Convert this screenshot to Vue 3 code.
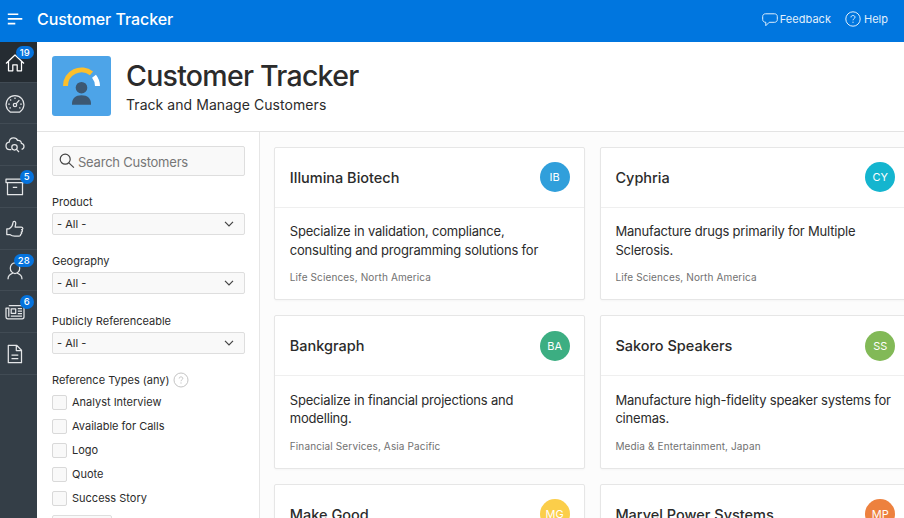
<script setup>
const nav = [
  { icon: 'home', badge: '19', active: true },
  { icon: 'gauge' },
  { icon: 'cloud' },
  { icon: 'archive', badge: '5' },
  { icon: 'thumb' },
  { icon: 'user', badge: '28' },
  { icon: 'news', badge: '6' },
  { icon: 'file' },
]
const filters = ['Product', 'Geography', 'Publicly Referenceable']
const types = ['Analyst Interview', 'Available for Calls', 'Logo', 'Quote', 'Success Story']
const cards = [
  { name: 'Illumina Biotech', initials: 'IB', tone: 'blue', lines: ['Specialize in validation, compliance,', 'consulting and programming solutions for'], meta: 'Life Sciences, North America' },
  { name: 'Cyphria', initials: 'CY', tone: 'cyan', lines: ['Manufacture drugs primarily for Multiple', 'Sclerosis.'], meta: 'Life Sciences, North America' },
  { name: 'Bankgraph', initials: 'BA', tone: 'green', lines: ['Specialize in financial projections and', 'modelling.'], meta: 'Financial Services, Asia Pacific' },
  { name: 'Sakoro Speakers', initials: 'SS', tone: 'lime', lines: ['Manufacture high-fidelity speaker systems for', 'cinemas.'], meta: 'Media & Entertainment, Japan' },
  { name: 'Make Good', initials: 'MG', tone: 'yellow', lines: [], meta: '' },
  { name: 'Marvel Power Systems', initials: 'MP', tone: 'orange', lines: [], meta: '' },
]
</script>

<template>
  <div class="app">
    <header class="topbar">
      <svg class="burger" width="16" height="12" viewBox="0 0 16 12"><path d="M.8 1.200h10.500M.8 5.900h14.500M.8 10.600h7.500" /></svg>
      <span class="brand">Customer Tracker</span>
      <span class="link feedback">
        <svg width="16" height="14" viewBox="0 0 16 14"><path d="M3.500 .8h9C14.300 .8 15.300 2 15.300 3.500v3c0 1.700-1.100 2.800-2.800 2.800H7.200L3.800 12.700V9.300C1.900 9.300.7 8.200.7 6.500v-3C.7 1.900 1.800.8 3.500.8z" /></svg>
        <span class="txt">Feedback</span>
      </span>
      <span class="link help">
        <svg width="16" height="16" viewBox="0 0 16 16"><circle cx="8" cy="8" r="7.200" /><path d="M6 6.400C6 5.200 6.800 4.500 8 4.500s2 .7 2 1.700c0 1.500-2 1.500-2 3.100M8 10.700v1.200" /></svg>
        <span class="txt">Help</span>
      </span>
    </header>

    <div class="body">
      <nav class="rail">
        <div v-for="item in nav" :key="item.icon" class="item" :class="{ active: item.active }">
          <svg v-if="item.icon === 'home'" width="20" height="20" viewBox="0 0 20 20"><path d="M1 10.500 10 2l9 8.500M3.500 8.500v9.300h4.300v-6h4.400v6h4.300V8.500" /></svg>
          <svg v-else-if="item.icon === 'gauge'" width="20" height="20" viewBox="0 0 20 20"><path d="M5.200 18a8.900 8.900 0 1 1 9.600 0z" /><circle cx="10" cy="11" r="1.700" /><path d="m11.300 9.600 3-3.500M10 3.500v1.600M5.200 5.500l1 1M3.200 10h1.600M15.200 10h1.600M4.500 14.200l1.300-.6M15.500 14.200l-1.300-.6" /></svg>
          <svg v-else-if="item.icon === 'cloud'" width="20" height="20" viewBox="0 0 20 20"><path d="M6.300 14.500H4.700A3.700 3.700 0 0 1 1 10.900c0-2 1.400-3.500 3.200-3.700C4.400 4.500 6.300 2.900 8.700 2.900c1.800 0 3.200.9 3.900 2.500 2.200-.4 3.800 1.100 3.800 3 1.500.3 2.600 1.400 2.600 3 0 1.500-1 2.600-2.400 3" /><circle cx="9.500" cy="12.300" r="2.700" /><path d="m11.500 14.300 2.500 2.700" /></svg>
          <svg v-else-if="item.icon === 'archive'" width="20" height="20" viewBox="0 0 20 20"><path d="M1 2.200h18v3.400H1zM2.500 5.600h15v12.100h-15zM7.800 10.300h4.400" /></svg>
          <svg v-else-if="item.icon === 'thumb'" width="20" height="20" viewBox="0 0 20 20"><path d="M1.800 9.800h2.400c2.300-1.500 3.600-3.300 3.700-5.800.1-1.200.6-1.700 1.300-1.700 1.200 0 1.600 1.200 1.500 2.500l-.6 3.200h6.100c2.100 0 2.100 2.500.4 2.600 1.300.3 1.100 2.300-.4 2.500.9.500.6 2-.7 2.200.3 1.200-.4 1.900-1.600 1.900H9.700c-2.200 0-3.600-.7-4.900-1.700h-3z" /></svg>
          <svg v-else-if="item.icon === 'user'" width="20" height="20" viewBox="0 0 20 20"><ellipse cx="10" cy="7.200" rx="4.700" ry="5.300" /><path d="M3 18.300c0-3.700 1.600-4.700 5-6.300M17 18.300c0-3.700-1.600-4.700-5-6.300" /></svg>
          <svg v-else-if="item.icon === 'news'" width="20" height="20" viewBox="0 0 20 20"><path d="M3.800 3.500h15.200v11.300c0 1.200-.6 2-1.800 2H2.800C1.600 16.800 1 16 1 14.800V6h2.800v8.800M6.200 6.800h4.500v4.500h-4.500zM12.800 6.500h4.200M12.800 9h4.200M12.800 11.500h4.200M5.800 14.200H17" /></svg>
          <svg v-else width="20" height="20" viewBox="0 0 20 20"><path d="M3.300 1.300h8.300l4.900 4.900v12.500H3.300zM11.300 1.300v5.200h5.200M6.500 11h6.800M6.500 14.500h6.800" /></svg>
          <span v-if="item.badge" class="badge">{{ item.badge }}</span>
        </div>
      </nav>

      <div class="page">
        <section class="hero">
          <svg class="logo" width="59" height="60" viewBox="0 0 59 60">
            <rect width="59" height="60" rx="3" fill="#4da4e8" />
            <path d="M13.500 30A16 16 0 0 1 39.500 17.400" fill="none" stroke="#fcbf2c" stroke-width="5" />
            <path d="M42 20.300A16 16 0 0 1 45.500 30" fill="none" stroke="#fff" stroke-width="5" />
            <circle cx="29.500" cy="31.700" r="5.800" fill="#3c5873" />
            <path d="M20 48.800v-1.300c0-5 3.500-8.300 9.500-8.300s9.500 3.300 9.500 8.300v1.300z" fill="#3c5873" />
          </svg>
          <div class="titles">
            <h1>Customer Tracker</h1>
            <p>Track and Manage Customers</p>
          </div>
        </section>

        <div class="content">
          <aside class="filters">
            <div class="search">
              <svg width="16" height="16" viewBox="0 0 16 16"><circle cx="6.200" cy="6.200" r="5" /><path d="m9.900 9.900 5 4.700" /></svg>
              <span>Search Customers</span>
            </div>
            <div v-for="f in filters" :key="f" class="field">
              <label>{{ f }}</label>
              <div class="select">
                <span>- All -</span>
                <svg width="10" height="6" viewBox="0 0 10 6"><path d="m1 .8 4 4 4-4" /></svg>
              </div>
            </div>
            <div class="legend">
              <span>Reference Types (any)</span>
              <svg width="16" height="16" viewBox="0 0 16 16"><circle cx="8" cy="8" r="7" /><path d="M6.200 6.500C6.200 5.400 6.900 4.900 8 4.900s1.800.6 1.800 1.500c0 1.300-1.800 1.400-1.800 2.800M8 10.400v1.200" /></svg>
            </div>
            <div v-for="t in types" :key="t" class="check"><i></i><span>{{ t }}</span></div>
            <div class="reset"></div>
          </aside>

          <main class="grid">
            <article v-for="c in cards" :key="c.name" class="card">
              <div class="head">
                <h2>{{ c.name }}</h2>
                <span class="avatar" :class="c.tone">{{ c.initials }}</span>
              </div>
              <div class="desc">
                <p v-for="l in c.lines" :key="l">{{ l }}</p>
                <small>{{ c.meta }}</small>
              </div>
            </article>
          </main>
        </div>
      </div>
    </div>
  </div>
</template>

<style>
body { overflow: hidden; }
</style>

<style scoped>
* { box-sizing: border-box; }
.app { width: 904px; height: 518px; overflow: hidden; display: flex; flex-direction: column; background: #fff; color: #2b2b2b; font-family: Inter, "Liberation Sans", sans-serif; white-space: nowrap; }
svg { flex: none; display: block; }
.topbar { height: 41.500px; flex: none; background: #0076df; color: #fff; display: flex; align-items: center; padding: 0 16px 3px 7px; }
.topbar svg, .rail svg, .filters svg { fill: none; stroke: currentColor; }
.burger { stroke-width: 1.600; }
.brand { margin-left: 14px; font-size: 16px; font-weight: 500; letter-spacing: -0.060px; flex: 1; }
.link { display: flex; align-items: center; gap: 3px; font-size: 11px; color: #e0effc; }
.feedback { gap: 2px; }
.feedback .txt { letter-spacing: .04px; }
.feedback svg { margin-top: 2px; }
.help { margin-left: 14px; }
.body { flex: 1; display: flex; min-height: 0; }
.rail { width: 37px; flex: none; background: #343e47; }
.item { position: relative; height: 41.700px; border-bottom: 1px solid #414b54; padding: 11px 0 0 5px; color: #e4e6e8; }
.item.active { background: #252c32; color: #fff; height: 41.300px; }
.rail svg { stroke-width: 1.250; stroke-linejoin: round; }
.badge { position: absolute; top: 4px; right: 3.500px; height: 13.500px; min-width: 13.500px; padding: 0 3.500px; border-radius: 7px; background: #0572dc; color: #fff; font-size: 9.500px; font-weight: 500; letter-spacing: .2px; line-height: 13.500px; text-align: center; }
.page { flex: 1; min-width: 0; display: flex; flex-direction: column; }
.hero { height: 90px; flex: none; display: flex; padding: 15px; border-bottom: 1px solid #e3e3e3; }
.logo { margin-top: -.5px; }
.titles { margin-left: 15px; }
h1 { margin: 1px 0 0; font-size: 28.500px; line-height: 36px; font-weight: 500; letter-spacing: -.74px; }
.titles p { margin: 1px 0 0; font-size: 14px; line-height: 20px; letter-spacing: .06px; }
.content { flex: 1; display: flex; min-height: 0; }
.filters { width: 223px; flex: none; padding: 14.500px 14.500px 0 15px; border-right: 1px solid #e6e6e6; font-size: 11px; }
.search { height: 30px; border: 1px solid #dedede; border-radius: 2px; background: #f9f9f9; display: flex; align-items: center; padding: 0 6px; gap: 3px; font-size: 13px; letter-spacing: -.22px; color: #767676; margin-bottom: 19px; }
.search span { padding-top: 1px; }
.search svg { color: #444; stroke-width: 1.200; margin-top: -1px; }
.field { height: 59.400px; }
.field label { display: block; line-height: 14px; height: 18px; }
.select { height: 22px; border: 1px solid #dedede; border-radius: 2px; background: #f9f9f9; display: flex; align-items: center; justify-content: space-between; padding: 0 10px 0 4px; }
.select svg { stroke-width: 1.200; color: #444; }
.legend { display: flex; align-items: center; gap: 3px; height: 16px; margin: -1.500px 0 3px; }
.legend svg { color: #c4c4c4; }
.check { height: 24px; display: flex; align-items: flex-start; line-height: 15px; padding-top: 4px; }
.check i { width: 15px; height: 15px; border: 1px solid #d9d9d9; border-radius: 2px; background: #f9f9f9; margin-right: 5px; }
.reset { width: 60px; height: 22px; margin-top: 4px; border: 1px solid #dedede; border-radius: 2px; background: #f9f9f9; }
.grid { flex: 1; display: grid; grid-template-columns: 311px 311px; grid-auto-rows: 153.700px; gap: 15px 14.600px; padding: 15px 0 0 14.200px; background: #fcfcfc; overflow: hidden; }
.card { background: #fff; border: 1px solid #e6e6e6; border-radius: 2px; box-shadow: 0 1px 2px #00000008; }
.head { height: 60px; border-bottom: 1px solid #efefef; display: flex; align-items: center; justify-content: space-between; padding: 0 14.600px; }
h2 { margin: 0; padding-top: 1px; font-size: 14.500px; font-weight: 500; line-height: 20px; }
.avatar { width: 30px; height: 30px; border-radius: 50%; line-height: 30px; text-align: center; color: #fff; font-size: 11px; }
.blue { background: #309fdb; }
.cyan { background: #14b5cf; }
.green { background: #3cae82; }
.lime { background: #82b957; }
.yellow { background: #fbce4a; }
.orange { background: #ed813e; }
.desc { padding: 14.500px 14.600px 0; font-size: 13px; letter-spacing: -.19px; }
.desc p { margin: 0; line-height: 18.700px; }
.desc p:nth-child(2) { margin-bottom: 11px; }
small { display: block; font-size: 10px; line-height: 15px; letter-spacing: .13px; color: #717171; }
</style>
